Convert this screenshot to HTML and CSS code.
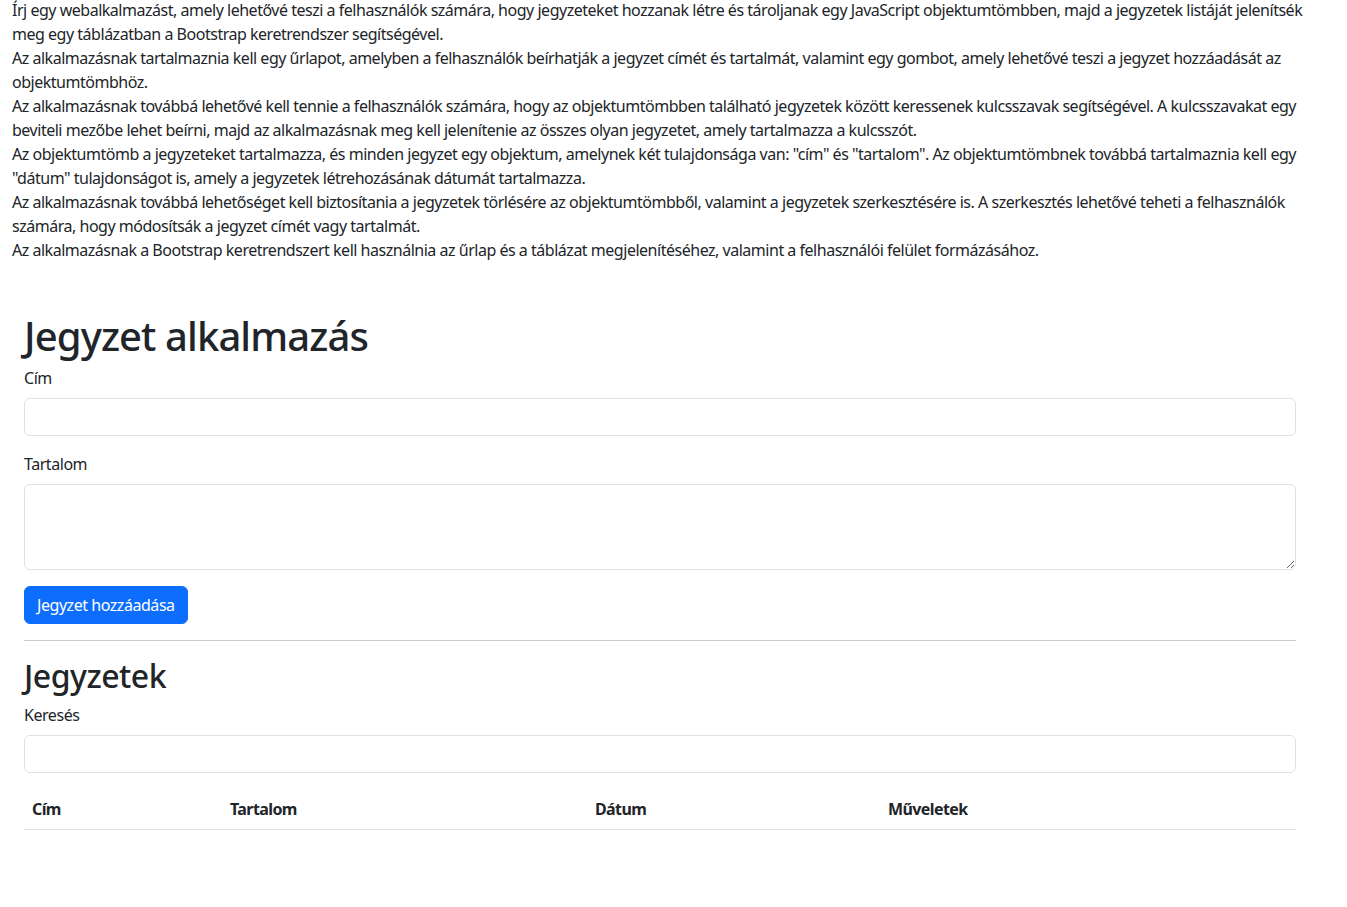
FILE: index.html
```html
<!DOCTYPE html>
<html lang="hu">
<head>
<meta charset="utf-8">
<title>Jegyzet alkalmazás</title>
<link rel="stylesheet" href="styles.css">
</head>
<body>
<div class="intro">
Írj egy webalkalmazást, amely lehetővé teszi a felhasználók számára, hogy jegyzeteket hozzanak létre és tároljanak egy JavaScript objektumtömbben, majd a jegyzetek listáját jelenítsék meg egy táblázatban a Bootstrap keretrendszer segítségével.<br>
Az alkalmazásnak tartalmaznia kell egy űrlapot, amelyben a felhasználók beírhatják a jegyzet címét és tartalmát, valamint egy gombot, amely lehetővé teszi a jegyzet hozzáadását az objektumtömbhöz.<br>
Az alkalmazásnak továbbá lehetővé kell tennie a felhasználók számára, hogy az objektumtömbben található jegyzetek között keressenek kulcsszavak segítségével. A kulcsszavakat egy beviteli mezőbe lehet beírni, majd az alkalmazásnak meg kell jelenítenie az összes olyan jegyzetet, amely tartalmazza a kulcsszót.<br>
Az objektumtömb a jegyzeteket tartalmazza, és minden jegyzet egy objektum, amelynek két tulajdonsága van: "cím" és "tartalom". Az objektumtömbnek továbbá tartalmaznia kell egy "dátum" tulajdonságot is, amely a jegyzetek létrehozásának dátumát tartalmazza.<br>
Az alkalmazásnak továbbá lehetőséget kell biztosítania a jegyzetek törlésére az objektumtömbből, valamint a jegyzetek szerkesztésére is. A szerkesztés lehetővé teheti a felhasználók számára, hogy módosítsák a jegyzet címét vagy tartalmát.<br>
Az alkalmazásnak a Bootstrap keretrendszert kell használnia az űrlap és a táblázat megjelenítéséhez, valamint a felhasználói felület formázásához.
</div>

<main class="app">
  <h1 class="title">Jegyzet alkalmazás</h1>
  <form class="note-form">
    <div class="field">
      <label class="label" for="cim">Cím</label>
      <input class="control" id="cim" type="text">
    </div>
    <div class="field">
      <label class="label" for="tartalom">Tartalom</label>
      <textarea class="control area" id="tartalom" rows="3"></textarea>
    </div>
    <button class="btn" type="button">Jegyzet hozzáadása</button>
  </form>
  <hr class="divider">
  <h2 class="subtitle">Jegyzetek</h2>
  <div class="field">
    <label class="label" for="kereses">Keresés</label>
    <input class="control" id="kereses" type="text">
  </div>
  <table class="notes">
    <thead>
      <tr>
        <th class="c1">Cím</th>
        <th class="c2">Tartalom</th>
        <th class="c3">Dátum</th>
        <th class="c4">Műveletek</th>
      </tr>
    </thead>
    <tbody></tbody>
  </table>
</main>
</body>
</html>
```
FILE: styles.css
```css
* { box-sizing: border-box; }
html, body { margin: 0; padding: 0; }
body {
  font-family: "Noto Sans", "Open Sans", sans-serif;
  font-size: 16px;
  line-height: 24px;
  color: #212529;
  background: #fff;
  letter-spacing: -0.45px;
}
.intro {
  padding: 0 12px;
  margin-top: -2px;
  letter-spacing: -0.48px;
}
.app {
  width: 1272px;
  margin: 48px 0 0 24px;
}
.title {
  font-size: 40px;
  font-weight: 500;
  line-height: 48px;
  margin: 0 0 8px;
  padding-top: 2px;
  height: 50px;
  letter-spacing: -0.9px;
}
.note-form { margin-top: -2px; }
.subtitle {
  font-size: 32px;
  font-weight: 500;
  line-height: 38px;
  margin: 0 0 8px;
  letter-spacing: -0.5px;
}
.field { margin-bottom: 16px; }
.label {
  display: block;
  margin-bottom: 8px;
}
.control {
  display: block;
  width: 100%;
  height: 38px;
  padding: 6px 12px;
  font: inherit;
  border: 1px solid #dee2e6;
  border-radius: 6px;
  background: #fff;
  color: #212529;
}
.area { height: 86px; resize: vertical; }
.btn {
  font: inherit;
  letter-spacing: -0.45px;
  color: #fff;
  background: #0d6efd;
  border: 1px solid #0d6efd;
  border-radius: 6px;
  height: 38px;
  padding: 6px 12px;
  cursor: pointer;
}
.divider {
  margin: 16px 0;
  border: 0;
  border-top: 1px solid #cbcbcd;
}
.notes {
  width: 100%;
  border-collapse: collapse;
  margin-top: 16px;
}
.notes th {
  text-align: left;
  font-weight: 700;
  padding: 8px;
  line-height: 24px;
  letter-spacing: -0.6px;
  border-bottom: 1px solid #dee2e6;
}
.c1 { width: 198px; }
.c2 { width: 365px; }
.c3 { width: 293px; }
```
